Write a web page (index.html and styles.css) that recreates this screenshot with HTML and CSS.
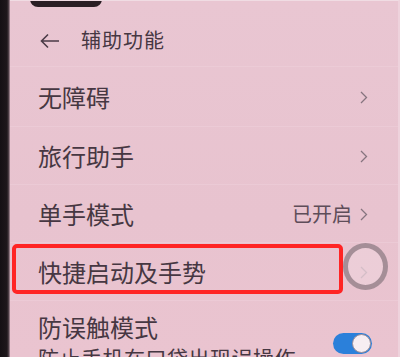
FILE: index.html
```html
<!DOCTYPE html>
<html lang="zh">
<head>
<meta charset="utf-8">
<link rel="stylesheet" href="styles.css">
</head>
<body>
<div class="device">
  <div class="bezel"></div>
  <div class="screen">
    <div class="notch"></div>
    <div class="header">
      <svg class="back" width="20" height="16" viewBox="0 0 20 16"><path d="M19 8H2M8 1.5L1.5 8L8 14.5" fill="none" stroke="#4b3b47" stroke-width="1.6"/></svg>
      <span class="title">辅助功能</span>
    </div>
    <div class="row first"><span class="label">无障碍</span><span class="right"><svg class="chev" width="8" height="13" viewBox="0 0 8 13"><path d="M1 1l5.5 5.5L1 12" fill="none" stroke="#86747f" stroke-width="1.3"/></svg></span></div>
    <div class="row"><span class="label">旅行助手</span><span class="right"><svg class="chev" width="8" height="13" viewBox="0 0 8 13"><path d="M1 1l5.5 5.5L1 12" fill="none" stroke="#86747f" stroke-width="1.3"/></svg></span></div>
    <div class="row"><span class="label">单手模式</span><span class="right"><span class="value">已开启</span><svg class="chev" width="8" height="13" viewBox="0 0 8 13"><path d="M1 1l5.5 5.5L1 12" fill="none" stroke="#86747f" stroke-width="1.3"/></svg></span></div>
    <div class="row highlight"><span class="label">快捷启动及手势</span><span class="right"><svg class="chev faint" width="8" height="13" viewBox="0 0 8 13"><path d="M1 1l5.5 5.5L1 12" fill="none" stroke="#b8a4af" stroke-width="1.3"/></svg></span>
      <div class="redbox"></div>
      <div class="touch"></div>
    </div>
    <div class="row last">
      <div class="texts">
        <span class="label">防误触模式</span>
        <span class="sub">防止手机在口袋出现误操作</span>
      </div>
      <span class="toggle"><span class="knob"></span></span>
    </div>
  </div>
</div>
</body>
</html>
```
FILE: styles.css
```css
html, body {
  margin: 0;
  padding: 0;
  width: 400px;
  height: 357px;
  overflow: hidden;
  background: #1a1418;
}
.device {
  display: flex;
  width: 400px;
  height: 357px;
}
.bezel {
  width: 10px;
  flex: none;
  background: linear-gradient(to right, #151014 0, #1e171b 7px, #5a4a52 9px, #c9a8b5 10px);
}
.screen {
  position: relative;
  flex: 1;
  background: linear-gradient(180deg, #e9c6d2 0%, #e8c3cf 60%, #eac4d0 100%);
  font-family: "Noto Sans CJK SC", "Noto Sans", sans-serif;
  color: #463742;
  overflow: hidden;
  border-right: 2px solid #eed2dc;
  border-top: 1px solid #f0dce3;
}
.notch {
  position: absolute;
  left: 20px;
  top: -2px;
  width: 72px;
  height: 8px;
  background: #2a1e24;
  border-radius: 0 0 9px 9px;
}
.header {
  height: 65px;
  box-sizing: border-box;
  padding: 27px 0 0 30px;
  display: flex;
  align-items: flex-start;
  gap: 21px;
}
.back {
  margin-top: 5px;
}
.title {
  font-size: 20px;
  line-height: 24px;
  letter-spacing: 1px;
}
.row {
  position: relative;
  height: 58px;
  box-sizing: border-box;
  padding: 0 30px 0 28px;
  display: flex;
  align-items: center;
  justify-content: space-between;
  border-top: 1px solid rgba(255, 240, 245, 0.15);
}
.row.first {
  height: 60px;
}
.label {
  font-size: 24px;
  line-height: 30px;
}
.right {
  display: flex;
  align-items: center;
  gap: 8px;
}
.value {
  font-size: 20px;
  color: #5e4d59;
}
.chev {
  margin-top: 1px;
}
.redbox {
  position: absolute;
  left: 2px;
  top: 1px;
  width: 331px;
  height: 50px;
  box-sizing: border-box;
  border: 4px solid #ff2424;
  border-radius: 5px;
}
.touch {
  position: absolute;
  left: 333px;
  top: 0;
  width: 45px;
  height: 47px;
  box-sizing: border-box;
  border: 5px solid rgba(140, 120, 130, 0.75);
  border-radius: 50%;
  background: rgba(240, 215, 224, 0.5);
}
.last {
  height: 60px;
  align-items: flex-start;
  padding-top: 11px;
}
.texts {
  display: flex;
  flex-direction: column;
}
.sub {
  font-size: 21px;
  line-height: 26px;
  margin-top: 2px;
  letter-spacing: 0.5px;
}
.toggle {
  position: relative;
  margin-top: 21px;
  margin-right: -4px;
  width: 39px;
  height: 21px;
  border-radius: 11px;
  background: #2b80da;
}
.knob {
  position: absolute;
  right: 1px;
  top: 1px;
  width: 19px;
  height: 19px;
  box-sizing: border-box;
  border-radius: 50%;
  background: #f6eef2;
  border: 1px solid #9d8e98;
}
```
